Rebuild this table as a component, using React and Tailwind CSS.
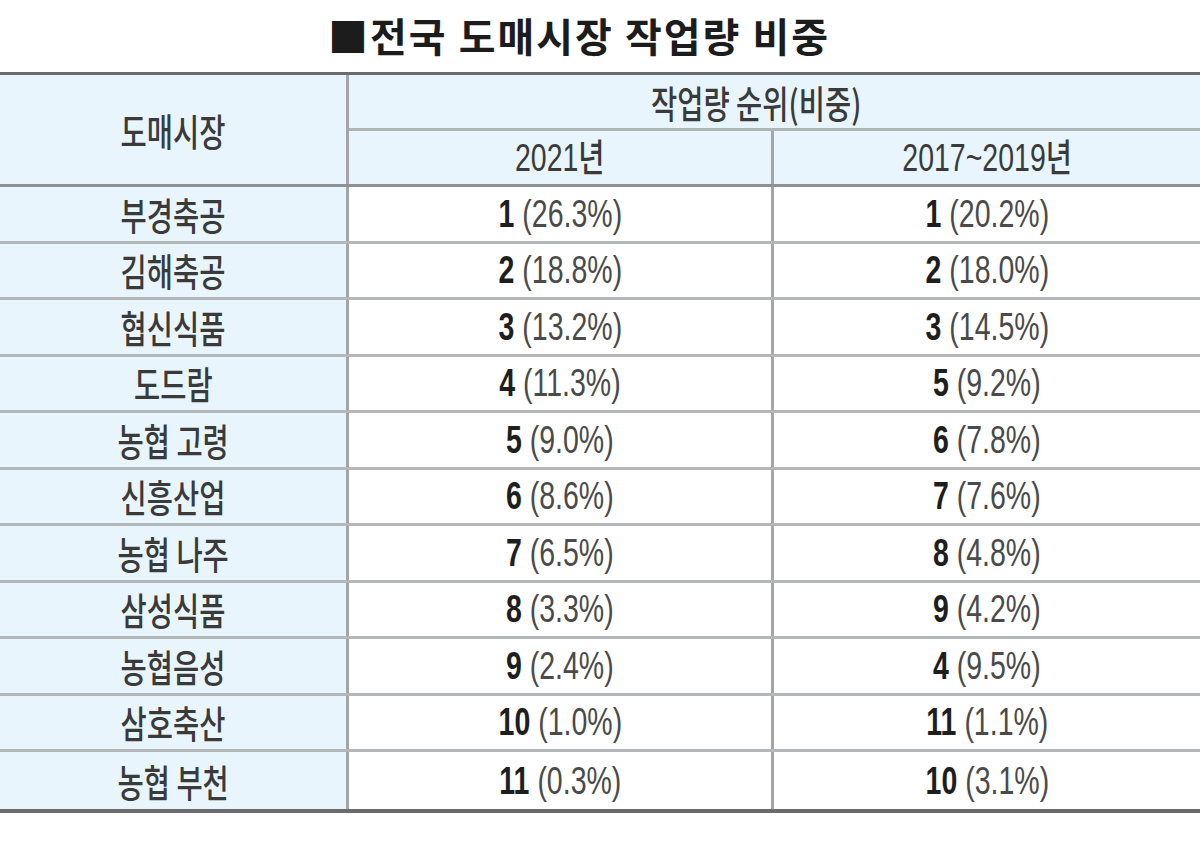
import React from "react";

const rows = [
  ["부경축공", "1", "(26.3%)", "1", "(20.2%)"],
  ["김해축공", "2", "(18.8%)", "2", "(18.0%)"],
  ["협신식품", "3", "(13.2%)", "3", "(14.5%)"],
  ["도드람", "4", "(11.3%)", "5", "(9.2%)"],
  ["농협 고령", "5", "(9.0%)", "6", "(7.8%)"],
  ["신흥산업", "6", "(8.6%)", "7", "(7.6%)"],
  ["농협 나주", "7", "(6.5%)", "8", "(4.8%)"],
  ["삼성식품", "8", "(3.3%)", "9", "(4.2%)"],
  ["농협음성", "9", "(2.4%)", "4", "(9.5%)"],
  ["삼호축산", "10", "(1.0%)", "11", "(1.1%)"],
  ["농협 부천", "11", "(0.3%)", "10", "(3.1%)"],
];

function Kr({ children }) {
  return (
    <span className="inline-block scale-x-[0.75] font-['Noto_Sans_CJK_KR',sans-serif] text-[38px] font-medium leading-none text-[#3a3a3a] whitespace-nowrap">
      {children}
    </span>
  );
}

function Num({ rank, pct }) {
  return (
    <span className="inline-block scale-x-[0.75] font-['Liberation_Sans',sans-serif] text-[38px] leading-none whitespace-nowrap">
      <span className="font-bold text-[#1e1e1e]">{rank}</span>
      <span className="text-[#4a4a4a]"> {pct}</span>
    </span>
  );
}

function Mixed({ children }) {
  return (
    <span className="inline-block scale-x-[0.75] font-['Liberation_Sans','Noto_Sans_CJK_KR',sans-serif] text-[38px] font-medium leading-none text-[#3a3a3a] whitespace-nowrap">
      {children}
    </span>
  );
}

export default function App() {
  return (
    <div className="w-[1200px] h-[853px] bg-white overflow-hidden">
      <div className="h-[72px] flex items-center justify-center pb-[2px] pr-[42px]">
        <span className="inline-block font-['Noto_Sans_CJK_KR',sans-serif] text-[40px] font-bold leading-none tracking-[2px] text-[#1c1c1c] whitespace-nowrap">
          ■전국 도매시장 작업량 비중
        </span>
      </div>
      <div className="border-t-[3px] border-[#6b6b6b]">
        <div className="flex h-[112px] bg-[#e8f5fc] border-b-[3px] border-[#8e9194]">
          <div className="w-[349px] border-r-[3px] border-[#a2a6a8] flex items-center justify-center">
            <Kr>도매시장</Kr>
          </div>
          <div className="flex-1 flex flex-col">
            <div className="h-[56px] border-b-[3px] border-[#afb4b7] flex items-center justify-center pr-[36px]">
              <Kr>작업량 순위(비중)</Kr>
            </div>
            <div className="flex-1 flex">
              <div className="w-[425px] border-r-[3px] border-[#a2a6a8] flex items-center justify-center">
                <Mixed>2021년</Mixed>
              </div>
              <div className="flex-1 flex items-center justify-center">
                <Mixed>2017~2019년</Mixed>
              </div>
            </div>
          </div>
        </div>
        {rows.map((r, i) => {
          const last = i === rows.length - 1;
          return (
            <div
              key={r[0]}
              className={
                last
                  ? "flex h-[61px] border-b-[4px] border-[#6b6b6b]"
                  : "flex h-[56.5px] border-b-[3px] border-[#b3b7ba]"
              }
            >
              <div className="w-[349px] bg-[#e8f5fc] border-r-[3px] border-[#a2a6a8] flex items-center justify-center">
                <Kr>{r[0]}</Kr>
              </div>
              <div className="w-[425px] border-r-[3px] border-[#a2a6a8] flex items-center justify-center">
                <Num rank={r[1]} pct={r[2]} />
              </div>
              <div className="flex-1 flex items-center justify-center">
                <Num rank={r[3]} pct={r[4]} />
              </div>
            </div>
          );
        })}
      </div>
    </div>
  );
}
